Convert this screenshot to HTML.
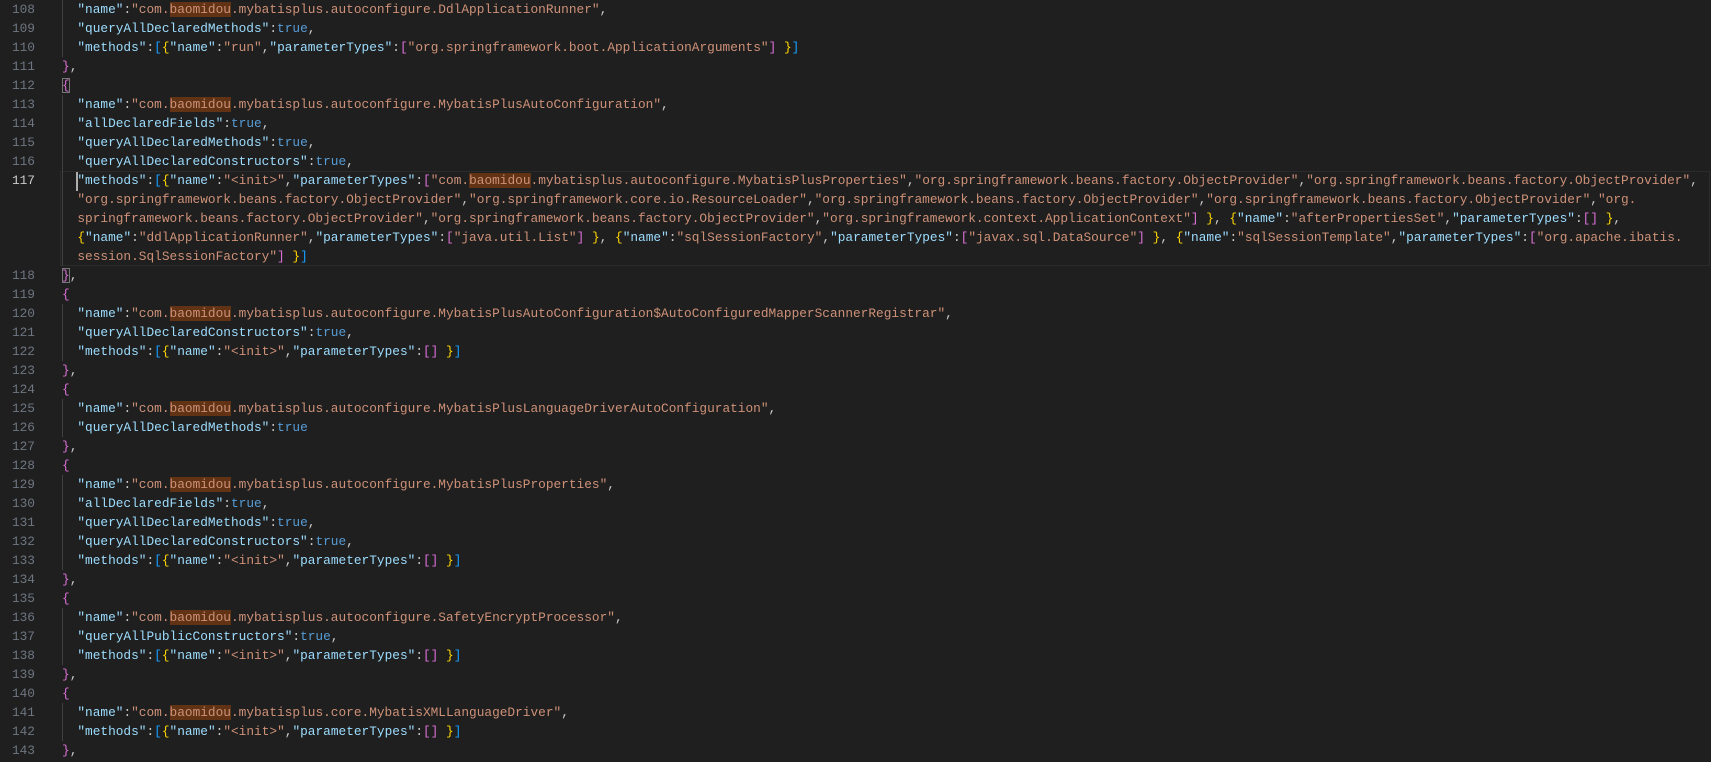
<!DOCTYPE html>
<html><head><meta charset="utf-8"><style>
html,body{margin:0;padding:0;background:#1f1f1f;width:1711px;height:762px;overflow:hidden}
body{font-family:"Liberation Mono",monospace;font-size:12.8px;color:#cccccc;position:relative}
.r{position:absolute;left:0;height:19px;line-height:19px;white-space:pre;width:1711px}
.n{position:absolute;left:0;width:35px;text-align:right;color:#6e7681}
.a .n{color:#cccccc}
.c0{position:absolute;left:62px}
.g{position:absolute;left:62px;top:0;width:1px;height:19px;background:#404040}
.k{color:#9cdcfe}.s{color:#ce9178}.b{color:#569cd6}.y{color:#ffd700}.m{color:#da70d6}.c{color:#179fff}
.h{background:#613214}
.box{outline:1px solid #777;outline-offset:-1px}
.cur{position:absolute;left:69px;top:172px;width:2px;height:19px;background:#aeafad}
.hl{position:absolute;left:60px;top:171px;width:1650px;height:95px;border:1px solid #2b2b2b;box-sizing:border-box}
</style></head><body>
<div class="hl"></div>
<div class="r" style="top:0"><span class="g"></span><span class="n">108</span><span class="c0">  <span class="k">"name"</span>:<span class="s">"com.<span class="h">baomidou</span>.mybatisplus.autoconfigure.DdlApplicationRunner"</span>,</span></div>
<div class="r" style="top:19px"><span class="g"></span><span class="n">109</span><span class="c0">  <span class="k">"queryAllDeclaredMethods"</span>:<span class="b">true</span>,</span></div>
<div class="r" style="top:38px"><span class="g"></span><span class="n">110</span><span class="c0">  <span class="k">"methods"</span>:<span class="c">[</span><span class="y">{</span><span class="k">"name"</span>:<span class="s">"run"</span>,<span class="k">"parameterTypes"</span>:<span class="m">[</span><span class="s">"org.springframework.boot.ApplicationArguments"</span><span class="m">]</span> <span class="y">}</span><span class="c">]</span></span></div>
<div class="r" style="top:57px"><span class="n">111</span><span class="c0"><span class="m">}</span>,</span></div>
<div class="r" style="top:76px"><span class="n">112</span><span class="c0"><span class="m box">{</span></span></div>
<div class="r" style="top:95px"><span class="g"></span><span class="n">113</span><span class="c0">  <span class="k">"name"</span>:<span class="s">"com.<span class="h">baomidou</span>.mybatisplus.autoconfigure.MybatisPlusAutoConfiguration"</span>,</span></div>
<div class="r" style="top:114px"><span class="g"></span><span class="n">114</span><span class="c0">  <span class="k">"allDeclaredFields"</span>:<span class="b">true</span>,</span></div>
<div class="r" style="top:133px"><span class="g"></span><span class="n">115</span><span class="c0">  <span class="k">"queryAllDeclaredMethods"</span>:<span class="b">true</span>,</span></div>
<div class="r" style="top:152px"><span class="g"></span><span class="n">116</span><span class="c0">  <span class="k">"queryAllDeclaredConstructors"</span>:<span class="b">true</span>,</span></div>
<div class="r a" style="top:171px"><span class="g"></span><span class="n">117</span><span class="c0">  <span class="k">"methods"</span>:<span class="c">[</span><span class="y">{</span><span class="k">"name"</span>:<span class="s">"&lt;init&gt;"</span>,<span class="k">"parameterTypes"</span>:<span class="m">[</span><span class="s">"com.<span class="h">baomidou</span>.mybatisplus.autoconfigure.MybatisPlusProperties"</span>,<span class="s">"org.springframework.beans.factory.ObjectProvider"</span>,<span class="s">"org.springframework.beans.factory.ObjectProvider"</span>,</span></div>
<div class="r" style="top:190px"><span class="g"></span><span class="c0">  <span class="s">"org.springframework.beans.factory.ObjectProvider"</span>,<span class="s">"org.springframework.core.io.ResourceLoader"</span>,<span class="s">"org.springframework.beans.factory.ObjectProvider"</span>,<span class="s">"org.springframework.beans.factory.ObjectProvider"</span>,<span class="s">"org.</span></span></div>
<div class="r" style="top:209px"><span class="g"></span><span class="c0">  <span class="s">springframework.beans.factory.ObjectProvider"</span>,<span class="s">"org.springframework.beans.factory.ObjectProvider"</span>,<span class="s">"org.springframework.context.ApplicationContext"</span><span class="m">]</span> <span class="y">}</span>, <span class="y">{</span><span class="k">"name"</span>:<span class="s">"afterPropertiesSet"</span>,<span class="k">"parameterTypes"</span>:<span class="m">[]</span> <span class="y">}</span>,</span></div>
<div class="r" style="top:228px"><span class="g"></span><span class="c0">  <span class="y">{</span><span class="k">"name"</span>:<span class="s">"ddlApplicationRunner"</span>,<span class="k">"parameterTypes"</span>:<span class="m">[</span><span class="s">"java.util.List"</span><span class="m">]</span> <span class="y">}</span>, <span class="y">{</span><span class="k">"name"</span>:<span class="s">"sqlSessionFactory"</span>,<span class="k">"parameterTypes"</span>:<span class="m">[</span><span class="s">"javax.sql.DataSource"</span><span class="m">]</span> <span class="y">}</span>, <span class="y">{</span><span class="k">"name"</span>:<span class="s">"sqlSessionTemplate"</span>,<span class="k">"parameterTypes"</span>:<span class="m">[</span><span class="s">"org.apache.ibatis.</span></span></div>
<div class="r" style="top:247px"><span class="g"></span><span class="c0">  <span class="s">session.SqlSessionFactory"</span><span class="m">]</span> <span class="y">}</span><span class="c">]</span></span></div>
<div class="r" style="top:266px"><span class="n">118</span><span class="c0"><span class="m box">}</span>,</span></div>
<div class="r" style="top:285px"><span class="n">119</span><span class="c0"><span class="m">{</span></span></div>
<div class="r" style="top:304px"><span class="g"></span><span class="n">120</span><span class="c0">  <span class="k">"name"</span>:<span class="s">"com.<span class="h">baomidou</span>.mybatisplus.autoconfigure.MybatisPlusAutoConfiguration$AutoConfiguredMapperScannerRegistrar"</span>,</span></div>
<div class="r" style="top:323px"><span class="g"></span><span class="n">121</span><span class="c0">  <span class="k">"queryAllDeclaredConstructors"</span>:<span class="b">true</span>,</span></div>
<div class="r" style="top:342px"><span class="g"></span><span class="n">122</span><span class="c0">  <span class="k">"methods"</span>:<span class="c">[</span><span class="y">{</span><span class="k">"name"</span>:<span class="s">"&lt;init&gt;"</span>,<span class="k">"parameterTypes"</span>:<span class="m">[]</span> <span class="y">}</span><span class="c">]</span></span></div>
<div class="r" style="top:361px"><span class="n">123</span><span class="c0"><span class="m">}</span>,</span></div>
<div class="r" style="top:380px"><span class="n">124</span><span class="c0"><span class="m">{</span></span></div>
<div class="r" style="top:399px"><span class="g"></span><span class="n">125</span><span class="c0">  <span class="k">"name"</span>:<span class="s">"com.<span class="h">baomidou</span>.mybatisplus.autoconfigure.MybatisPlusLanguageDriverAutoConfiguration"</span>,</span></div>
<div class="r" style="top:418px"><span class="g"></span><span class="n">126</span><span class="c0">  <span class="k">"queryAllDeclaredMethods"</span>:<span class="b">true</span></span></div>
<div class="r" style="top:437px"><span class="n">127</span><span class="c0"><span class="m">}</span>,</span></div>
<div class="r" style="top:456px"><span class="n">128</span><span class="c0"><span class="m">{</span></span></div>
<div class="r" style="top:475px"><span class="g"></span><span class="n">129</span><span class="c0">  <span class="k">"name"</span>:<span class="s">"com.<span class="h">baomidou</span>.mybatisplus.autoconfigure.MybatisPlusProperties"</span>,</span></div>
<div class="r" style="top:494px"><span class="g"></span><span class="n">130</span><span class="c0">  <span class="k">"allDeclaredFields"</span>:<span class="b">true</span>,</span></div>
<div class="r" style="top:513px"><span class="g"></span><span class="n">131</span><span class="c0">  <span class="k">"queryAllDeclaredMethods"</span>:<span class="b">true</span>,</span></div>
<div class="r" style="top:532px"><span class="g"></span><span class="n">132</span><span class="c0">  <span class="k">"queryAllDeclaredConstructors"</span>:<span class="b">true</span>,</span></div>
<div class="r" style="top:551px"><span class="g"></span><span class="n">133</span><span class="c0">  <span class="k">"methods"</span>:<span class="c">[</span><span class="y">{</span><span class="k">"name"</span>:<span class="s">"&lt;init&gt;"</span>,<span class="k">"parameterTypes"</span>:<span class="m">[]</span> <span class="y">}</span><span class="c">]</span></span></div>
<div class="r" style="top:570px"><span class="n">134</span><span class="c0"><span class="m">}</span>,</span></div>
<div class="r" style="top:589px"><span class="n">135</span><span class="c0"><span class="m">{</span></span></div>
<div class="r" style="top:608px"><span class="g"></span><span class="n">136</span><span class="c0">  <span class="k">"name"</span>:<span class="s">"com.<span class="h">baomidou</span>.mybatisplus.autoconfigure.SafetyEncryptProcessor"</span>,</span></div>
<div class="r" style="top:627px"><span class="g"></span><span class="n">137</span><span class="c0">  <span class="k">"queryAllPublicConstructors"</span>:<span class="b">true</span>,</span></div>
<div class="r" style="top:646px"><span class="g"></span><span class="n">138</span><span class="c0">  <span class="k">"methods"</span>:<span class="c">[</span><span class="y">{</span><span class="k">"name"</span>:<span class="s">"&lt;init&gt;"</span>,<span class="k">"parameterTypes"</span>:<span class="m">[]</span> <span class="y">}</span><span class="c">]</span></span></div>
<div class="r" style="top:665px"><span class="n">139</span><span class="c0"><span class="m">}</span>,</span></div>
<div class="r" style="top:684px"><span class="n">140</span><span class="c0"><span class="m">{</span></span></div>
<div class="r" style="top:703px"><span class="g"></span><span class="n">141</span><span class="c0">  <span class="k">"name"</span>:<span class="s">"com.<span class="h">baomidou</span>.mybatisplus.core.MybatisXMLLanguageDriver"</span>,</span></div>
<div class="r" style="top:722px"><span class="g"></span><span class="n">142</span><span class="c0">  <span class="k">"methods"</span>:<span class="c">[</span><span class="y">{</span><span class="k">"name"</span>:<span class="s">"&lt;init&gt;"</span>,<span class="k">"parameterTypes"</span>:<span class="m">[]</span> <span class="y">}</span><span class="c">]</span></span></div>
<div class="r" style="top:741px"><span class="n">143</span><span class="c0"><span class="m">}</span>,</span></div>
<div class="cur" style="left:76px"></div>
</body></html>
